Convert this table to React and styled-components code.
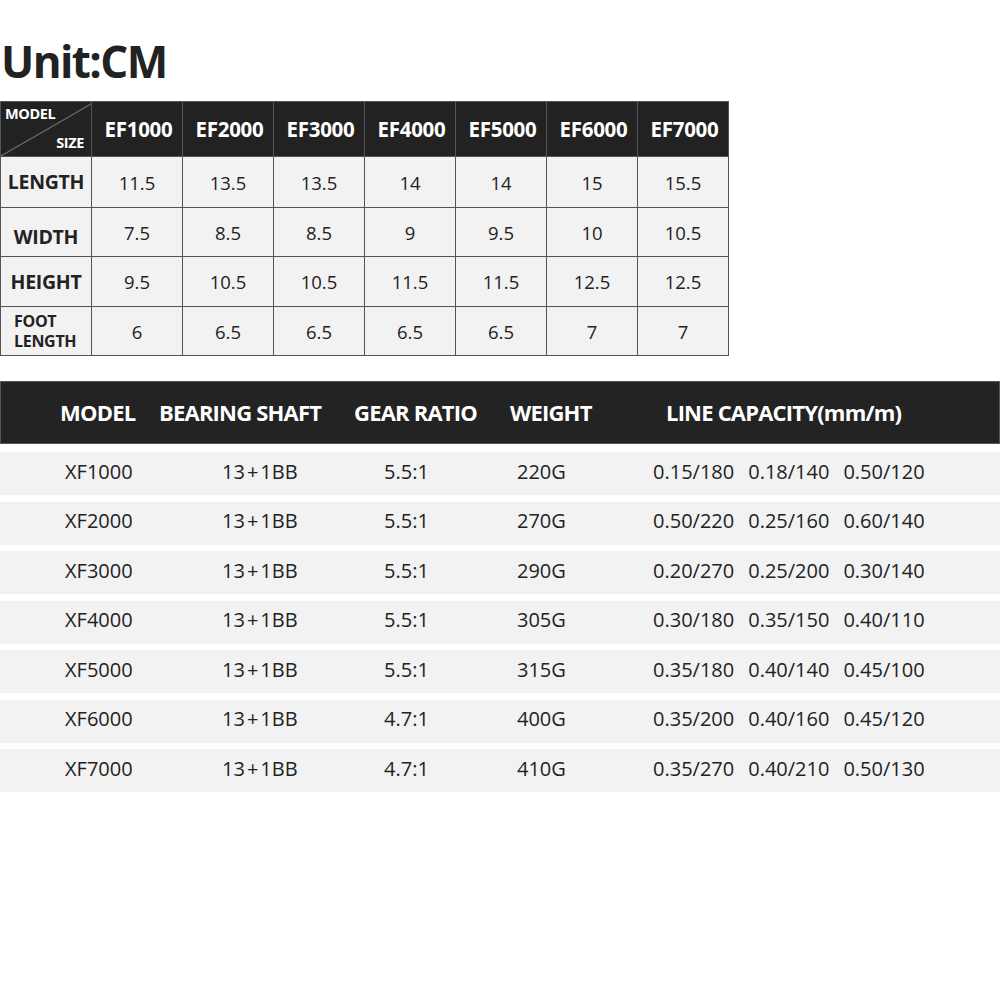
import styled, { createGlobalStyle } from "styled-components";

const DARK = "#222222";
const LINE = "#555555";
const CELL = "#f2f2f2";
const TEXT = "#222222";

const GlobalStyle = createGlobalStyle`
  body {
    margin: 0;
    background: #ffffff;
    font-family: "Open Sans", "Noto Sans", sans-serif;
    color: ${TEXT};
  }
`;

const Page = styled.div`
  width: 1000px;
  height: 1000px;
  display: flex;
  flex-direction: column;
`;

const Title = styled.h1`
  margin: 38px 0 0 1px;
  font-size: 44px;
  line-height: 46px;
  font-weight: 700;
  letter-spacing: -1.6px;
  color: ${TEXT};
`;

// ---- size table ----
const SizeGrid = styled.div`
  margin-top: 17px;
  display: grid;
  grid-template-columns: repeat(8, 90px);
  grid-template-rows: 54px 50px 48px 49px 48px;
  gap: 1px;
  padding: 1px;
  background: ${LINE};
  width: fit-content;
`;

const HeadCell = styled.div`
  background: ${DARK};
  color: #ffffff;
  font-weight: 700;
  font-size: 20.5px;
  letter-spacing: -0.3px;
  display: flex;
  align-items: center;
  justify-content: center;
  padding-left: 3px;
`;

const CornerCell = styled.div`
  position: relative;
  background: ${DARK};
  color: #ffffff;
  font-weight: 700;
  font-size: 14.5px;
  letter-spacing: -0.4px;
  display: flex;
  flex-direction: column;
  justify-content: space-between;
  padding: 3px 7px 4px 4px;
`;

const Diagonal = styled.svg`
  position: absolute;
  left: 0;
  top: 0;
  width: 100%;
  height: 100%;
`;

const CornerText = styled.span`
  position: relative;
  line-height: 18px;
  align-self: ${(p) => (p.$end ? "flex-end" : "flex-start")};
`;

const LabelCell = styled.div`
  background: ${CELL};
  font-weight: 700;
  font-size: ${(p) => (p.$small ? "16px" : "19.5px")};
  line-height: ${(p) => (p.$small ? "20px" : "22px")};
  letter-spacing: -0.3px;
  display: flex;
  align-items: center;
  justify-content: ${(p) => (p.$small ? "flex-start" : "center")};
  padding: ${(p) => (p.$small ? "0 0 0 13px" : "0")};
  padding-top: ${(p) => p.$shift || 0}px;
`;

const ValueCell = styled.div`
  background: ${CELL};
  font-size: 18.5px;
  display: flex;
  align-items: center;
  justify-content: center;
`;

// ---- spec table ----
const SpecHeader = styled.div`
  margin-top: 25px;
  height: 59px;
  border: 1px solid ${LINE};
  background: #232323;
  color: #ffffff;
  font-weight: 700;
  font-size: 22px;
  letter-spacing: -0.8px;
  display: grid;
  grid-template-columns: 99px 195px 156px 156px 1fr;
  align-items: center;
  padding-left: 59px;
  padding-bottom: 2px;
`;

const SpecRows = styled.div`
  margin-top: 8px;
  display: flex;
  flex-direction: column;
  gap: 6.5px;
`;

const SpecRow = styled.div`
  height: 43px;
  background: ${CELL};
  display: grid;
  grid-template-columns: 157px 162px 133px 136px 1fr;
  align-items: center;
  padding-left: 65px;
  padding-bottom: 5px;
  box-sizing: border-box;
  font-size: 20px;
`;

const Capacity = styled.div`
  display: flex;
  gap: 14px;
`;

const Plus = styled.span`
  margin: 0 2px;
`;

const sizes = ["EF1000", "EF2000", "EF3000", "EF4000", "EF5000", "EF6000", "EF7000"];
const sizeRows = [
  { label: "LENGTH", shift: 0, values: ["11.5", "13.5", "13.5", "14", "14", "15", "15.5"] },
  { label: "WIDTH", shift: 10, values: ["7.5", "8.5", "8.5", "9", "9.5", "10", "10.5"] },
  { label: "HEIGHT", shift: 0, values: ["9.5", "10.5", "10.5", "11.5", "11.5", "12.5", "12.5"] },
  { label: "FOOT\nLENGTH", small: true, values: ["6", "6.5", "6.5", "6.5", "6.5", "7", "7"] },
];

const specs = [
  ["XF1000", "5.5:1", "220G", ["0.15/180", "0.18/140", "0.50/120"]],
  ["XF2000", "5.5:1", "270G", ["0.50/220", "0.25/160", "0.60/140"]],
  ["XF3000", "5.5:1", "290G", ["0.20/270", "0.25/200", "0.30/140"]],
  ["XF4000", "5.5:1", "305G", ["0.30/180", "0.35/150", "0.40/110"]],
  ["XF5000", "5.5:1", "315G", ["0.35/180", "0.40/140", "0.45/100"]],
  ["XF6000", "4.7:1", "400G", ["0.35/200", "0.40/160", "0.45/120"]],
  ["XF7000", "4.7:1", "410G", ["0.35/270", "0.40/210", "0.50/130"]],
];

export default function App() {
  return (
    <Page>
      <GlobalStyle />
      <Title>Unit:CM</Title>

      <SizeGrid>
        <CornerCell>
          <Diagonal viewBox="0 0 90 54" preserveAspectRatio="none">
            <line x1="0" y1="54" x2="90" y2="2" stroke="#6a6a6a" strokeWidth="1.2" />
          </Diagonal>
          <CornerText>MODEL</CornerText>
          <CornerText $end>SIZE</CornerText>
        </CornerCell>
        {sizes.map((s) => (
          <HeadCell key={s}>{s}</HeadCell>
        ))}
        {sizeRows.map((r) => [
          <LabelCell key={r.label} $small={r.small} $shift={r.shift}>
            {r.small ? (
              <span>
                FOOT
                <br />
                LENGTH
              </span>
            ) : (
              r.label
            )}
          </LabelCell>,
          ...r.values.map((v, i) => <ValueCell key={r.label + i}>{v}</ValueCell>),
        ])}
      </SizeGrid>

      <SpecHeader>
        <span>MODEL</span>
        <span>BEARING SHAFT</span>
        <span>GEAR RATIO</span>
        <span>WEIGHT</span>
        <span>LINE CAPACITY(mm/m)</span>
      </SpecHeader>

      <SpecRows>
        {specs.map(([model, ratio, weight, caps]) => (
          <SpecRow key={model}>
            <span>{model}</span>
            <span>
              13<Plus>+</Plus>1BB
            </span>
            <span>{ratio}</span>
            <span>{weight}</span>
            <Capacity>
              {caps.map((c) => (
                <span key={c}>{c}</span>
              ))}
            </Capacity>
          </SpecRow>
        ))}
      </SpecRows>
    </Page>
  );
}
